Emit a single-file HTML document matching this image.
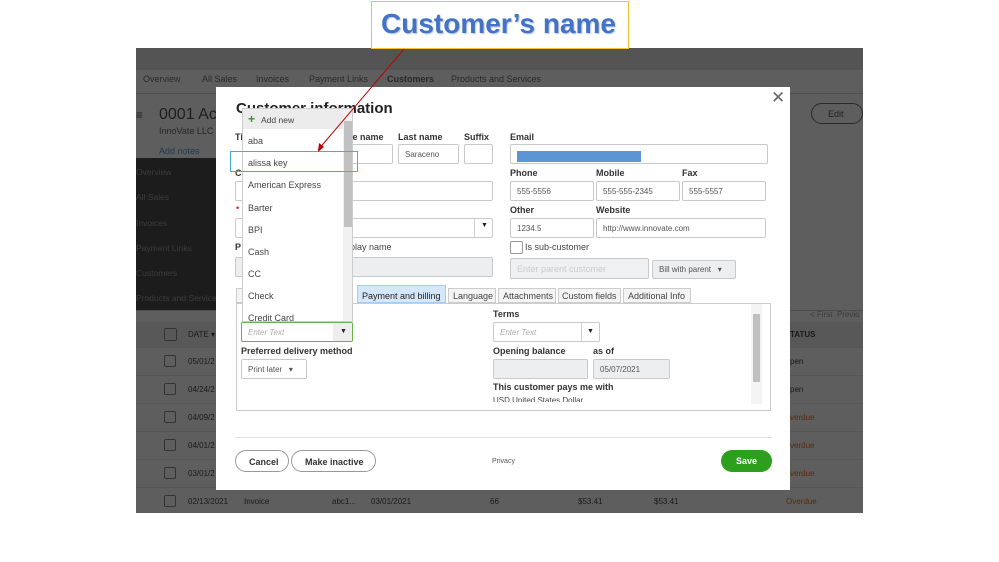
<!DOCTYPE html><html><head><style>
*{box-sizing:border-box;margin:0;padding:0}
body{width:999px;height:562px;background:#fff;position:relative;overflow:hidden;font-family:"Liberation Sans",sans-serif;font-size:9px;color:#222}
.a{position:absolute;white-space:nowrap}
.in{position:absolute;border:1px solid #c9c9c9;background:#fff;border-radius:2px;font-size:8px;color:#555;padding:0 6px;display:flex;align-items:center;white-space:nowrap}
.lb{position:absolute;font-size:9px;color:#333;font-weight:bold;white-space:nowrap}
.g{color:#444}
.tab{position:absolute;top:288px;height:15px;border:1px solid #ccc;background:#f4f4f4;font-size:9px;color:#444;padding:2px 4px;white-space:nowrap;overflow:hidden}
.row{position:absolute;left:136px;width:727px;height:28px;border-top:1px solid #555;color:#1a1a1a;font-size:8px}
.cb{position:absolute;left:28px;top:7px;width:12px;height:12px;border:1px solid #333;border-radius:2px}
.dd{position:absolute;left:248px;font-size:9px;color:#444}
</style></head><body>
<div class="a" style="left:136px;top:48px;width:727px;height:465px;background:#5e5e5e"></div>
<div class="a" style="left:136px;top:48px;width:727px;height:22px;background:#545454"></div>
<div class="a" style="left:136px;top:74px;width:727px;font-size:9px;color:#2a2a2a">
<span class="a" style="left:7px">Overview</span><span class="a" style="left:66px">All Sales</span><span class="a" style="left:120px">Invoices</span><span class="a" style="left:173px">Payment Links</span><span class="a" style="left:251px;font-weight:bold">Customers</span><span class="a" style="left:315px">Products and Services</span></div>
<div class="a" style="left:136px;top:93px;width:727px;height:1px;background:#505050"></div>
<div class="a" style="left:136px;top:108px;font-size:12px;color:#222">≡</div>
<div class="a" style="left:159px;top:106px;font-size:16px;color:#1e1e1e">0001 Ac</div>
<div class="a" style="left:159px;top:126px;font-size:9px;color:#262626">InnoVate LLC</div>
<div class="a" style="left:159px;top:146px;font-size:9px;color:#1c3a55">Add notes</div>
<div class="a" style="left:811px;top:103px;width:52px;height:21px;border:1px solid #2a2a2a;border-radius:11px;font-size:9px;color:#222;padding:5px 0 0 16px">Edit</div>
<div class="a" style="left:136px;top:158px;width:82px;height:152px;background:#1c1c1c;color:#3c3c3c;font-size:8.5px;overflow:hidden">
<div class="a" style="top:9px;left:0">Overview</div><div class="a" style="top:34px">All Sales</div><div class="a" style="top:60px">Invoices</div><div class="a" style="top:85px">Payment Links</div><div class="a" style="top:110px">Customers</div><div class="a" style="top:135px">Products and Services</div></div>
<div class="a" style="left:136px;top:310px;width:727px;height:1px;background:#4c4c4c"></div>
<div class="a" style="left:810px;top:310px;font-size:8px;color:#3c3c3c">&lt; First &nbsp;Previo</div>
<div class="a" style="left:136px;top:322px;width:727px;height:25px;background:#585858"></div>
<div class="a" style="left:164px;top:328px;width:13px;height:13px;border:1px solid #333;border-radius:2px"></div>
<div class="a" style="left:188px;top:330px;font-size:8px;color:#1a1a1a">DATE ▾</div>
<div class="a" style="left:790px;top:330px;font-size:8px;color:#1a1a1a;font-weight:bold">TATUS</div>
<div class="row" style="top:347px"><div class="cb"></div><span class="a" style="left:52px;top:9px">05/01/2</span><span class="a" style="left:654px;top:9px">pen</span></div>
<div class="row" style="top:375px"><div class="cb"></div><span class="a" style="left:52px;top:9px">04/24/2</span><span class="a" style="left:654px;top:9px">pen</span></div>
<div class="row" style="top:403px"><div class="cb"></div><span class="a" style="left:52px;top:9px">04/09/2</span><span class="a" style="left:654px;top:9px;color:#5a2a10">verdue</span></div>
<div class="row" style="top:431px"><div class="cb"></div><span class="a" style="left:52px;top:9px">04/01/2</span><span class="a" style="left:654px;top:9px;color:#5a2a10">verdue</span></div>
<div class="row" style="top:459px"><div class="cb"></div><span class="a" style="left:52px;top:9px">03/01/2</span><span class="a" style="left:654px;top:9px;color:#5a2a10">verdue</span></div>
<div class="row" style="top:487px;height:26px"><div class="cb"></div><span class="a" style="left:52px;top:9px">02/13/2021</span><span class="a" style="left:108px;top:9px">Invoice</span><span class="a" style="left:196px;top:9px">abc1...</span><span class="a" style="left:235px;top:9px">03/01/2021</span><span class="a" style="left:354px;top:9px">66</span><span class="a" style="left:442px;top:9px">$53.41</span><span class="a" style="left:518px;top:9px">$53.41</span><span class="a" style="left:650px;top:9px;color:#5a2a10">Overdue</span></div>
<!-- modal -->
<div class="a" style="left:216px;top:87px;width:574px;height:403px;background:#fff"></div>
<div class="a" style="left:771px;top:88px;font-size:17px;color:#666">✕</div>
<div class="a" style="left:236px;top:100px;font-size:15px;font-weight:bold;color:#222">Customer information</div>
<div class="lb" style="left:235px;top:132px">Ti</div>
<div class="lb" style="left:350px;top:132px">le name</div><div class="lb" style="left:398px;top:132px">Last name</div><div class="lb" style="left:464px;top:132px">Suffix</div><div class="lb" style="left:510px;top:132px">Email</div>
<div class="in" style="left:340px;top:144px;width:53px;height:20px"></div>
<div class="in" style="left:398px;top:144px;width:61px;height:20px">Saraceno</div>
<div class="in" style="left:464px;top:144px;width:29px;height:20px"></div>
<div class="in" style="left:510px;top:144px;width:258px;height:20px"></div>
<div class="a" style="left:517px;top:151px;width:124px;height:11px;background:#5b95d4"></div>
<div class="lb" style="left:235px;top:168px">C</div>
<div class="in" style="left:235px;top:181px;width:258px;height:20px"></div>
<div class="lb" style="left:510px;top:168px">Phone</div><div class="lb" style="left:596px;top:168px">Mobile</div><div class="lb" style="left:682px;top:168px">Fax</div>
<div class="in" style="left:510px;top:181px;width:84px;height:20px">555-5556</div>
<div class="in" style="left:596px;top:181px;width:84px;height:20px">555-555-2345</div>
<div class="in" style="left:682px;top:181px;width:84px;height:20px">555-5557</div>
<div class="a" style="left:236px;top:203px;color:#e03;font-size:9px">•</div>
<div class="lb" style="left:510px;top:205px">Other</div><div class="lb" style="left:596px;top:205px">Website</div>
<div class="in" style="left:235px;top:218px;width:258px;height:20px"></div>
<div class="a" style="left:474px;top:218px;width:1px;height:20px;background:#ccc"></div><div class="a" style="left:481px;top:222px;font-size:7px">▼</div>
<div class="in" style="left:510px;top:218px;width:84px;height:20px">1234.5</div>
<div class="in" style="left:596px;top:218px;width:170px;height:20px">http://www.innovate.com</div>
<div class="lb" style="left:235px;top:242px">P</div><div class="a g" style="left:350px;top:242px;font-size:9px">play name</div>
<div class="a" style="left:510px;top:241px;width:13px;height:13px;border:1px solid #999;border-radius:2px"></div>
<div class="a g" style="left:525px;top:242px;font-size:9px">Is sub-customer</div>
<div class="in" style="left:235px;top:257px;width:258px;height:20px;background:#eceef0"></div>
<div class="in" style="left:510px;top:258px;width:139px;height:21px;background:#eef0f2;color:#ccc;font-size:9px">Enter parent customer</div>
<div class="in" style="left:652px;top:260px;width:84px;height:19px;background:#eceef0;font-size:8px">Bill with parent &nbsp;&nbsp;▾</div>
<div class="tab" style="left:236px;width:10px"></div>
<div class="tab" style="left:357px;width:89px;background:#d5e8fb;border-color:#a8cbee;color:#222;top:285px;height:18px;padding-top:5px">Payment and billing</div>
<div class="tab" style="left:448px;width:48px">Language</div>
<div class="tab" style="left:498px;width:58px">Attachments</div>
<div class="tab" style="left:558px;width:63px;padding-left:3px">Custom fields</div>
<div class="tab" style="left:623px;width:68px">Additional Info</div>
<div class="a" style="left:236px;top:303px;width:535px;height:108px;border:1px solid #ccc"></div>
<div class="a" style="left:751px;top:304px;width:11px;height:100px;background:#f4f4f4"></div>
<div class="a" style="left:753px;top:314px;width:7px;height:68px;background:#c0c0c0"></div>
<div class="in" style="left:241px;top:322px;width:112px;height:20px;border:1px solid #6ab04c;font-style:italic;color:#aaa">Enter Text</div>
<div class="a" style="left:333px;top:323px;width:19px;height:18px;background:#eee"></div><div class="a" style="left:340px;top:328px;font-size:7px">▼</div>
<div class="lb" style="left:241px;top:346px">Preferred delivery method</div>
<div class="in" style="left:241px;top:359px;width:66px;height:20px">Print later &nbsp;&nbsp;▾</div>
<div class="lb" style="left:493px;top:309px">Terms</div>
<div class="in" style="left:493px;top:322px;width:107px;height:20px;font-style:italic;color:#aaa">Enter Text</div>
<div class="a" style="left:581px;top:322px;width:1px;height:20px;background:#ccc"></div><div class="a" style="left:587px;top:328px;font-size:7px">▼</div>
<div class="lb" style="left:493px;top:346px">Opening balance</div><div class="lb" style="left:593px;top:346px">as of</div>
<div class="in" style="left:493px;top:359px;width:95px;height:20px;background:#eceef0"></div>
<div class="in" style="left:593px;top:359px;width:77px;height:20px;background:#eceef0">05/07/2021</div>
<div class="lb" style="left:493px;top:382px">This customer pays me with</div>
<div class="a g" style="left:493px;top:396px;font-size:8px;height:6px;overflow:hidden">USD United States Dollar</div>
<div class="a" style="left:235px;top:437px;width:537px;height:1px;background:#ddd"></div>
<div class="a" style="left:235px;top:450px;width:54px;height:22px;border:1px solid #999;border-radius:11px;font-weight:bold;padding:6px 0 0 13px;color:#333">Cancel</div>
<div class="a" style="left:291px;top:450px;width:85px;height:22px;border:1px solid #999;border-radius:11px;font-weight:bold;padding:6px 0 0 13px;color:#333">Make inactive</div>
<div class="a" style="left:492px;top:458px;font-size:7px;color:#555">Privacy</div>
<div class="a" style="left:721px;top:450px;width:51px;height:22px;background:#2ca01c;border-radius:11px;font-weight:bold;color:#fff;padding:6px 0 0 15px">Save</div>
<!-- dropdown -->
<div class="a" style="left:242px;top:108px;width:111px;height:214px;background:#fff;border:1px solid #ccc;overflow:hidden">
<div class="a" style="left:0;top:0;width:100px;height:20px;background:#ececec"></div>
<div class="a" style="left:5px;top:3px;color:#2ca01c;font-weight:bold;font-size:12px">+</div>
<div class="a" style="left:18px;top:6px;font-size:8.5px;color:#444">Add new</div>
<div class="a" style="left:100px;top:0;width:10px;height:214px;background:#f1f1f1"></div>
<div class="a" style="left:101px;top:12px;width:8px;height:106px;background:#c1c1c1"></div>
</div>
<div class="dd" style="top:136px">aba</div><div class="dd" style="top:158px">alissa key</div><div class="dd" style="top:180px">American Express</div><div class="dd" style="top:203px">Barter</div><div class="dd" style="top:225px">BPI</div><div class="dd" style="top:247px">Cash</div><div class="dd" style="top:269px">CC</div><div class="dd" style="top:291px">Check</div><div class="dd" style="top:313px;height:8px;overflow:hidden">Credit Card</div>
<div class="a" style="left:230px;top:151px;width:128px;height:21px;border:1px solid #4aa8dc"></div>
<!-- callout -->
<div class="a" style="left:371px;top:1px;width:258px;height:48px;border:1px solid #f2c032;background:#fff"></div>
<div class="a" style="left:381px;top:8px;font-family:'Liberation Sans',sans-serif;font-size:28px;font-weight:bold;color:#4472c4;text-shadow:1px 1px 1px #b8c8e8">Customer’s name</div>
<svg class="a" style="left:0;top:0" width="999" height="562"><line x1="404" y1="49" x2="318" y2="150" stroke="#c00000" stroke-width="1"/><polygon points="318,152 319,143 324,147" fill="#c00000"/></svg>
</body></html>
